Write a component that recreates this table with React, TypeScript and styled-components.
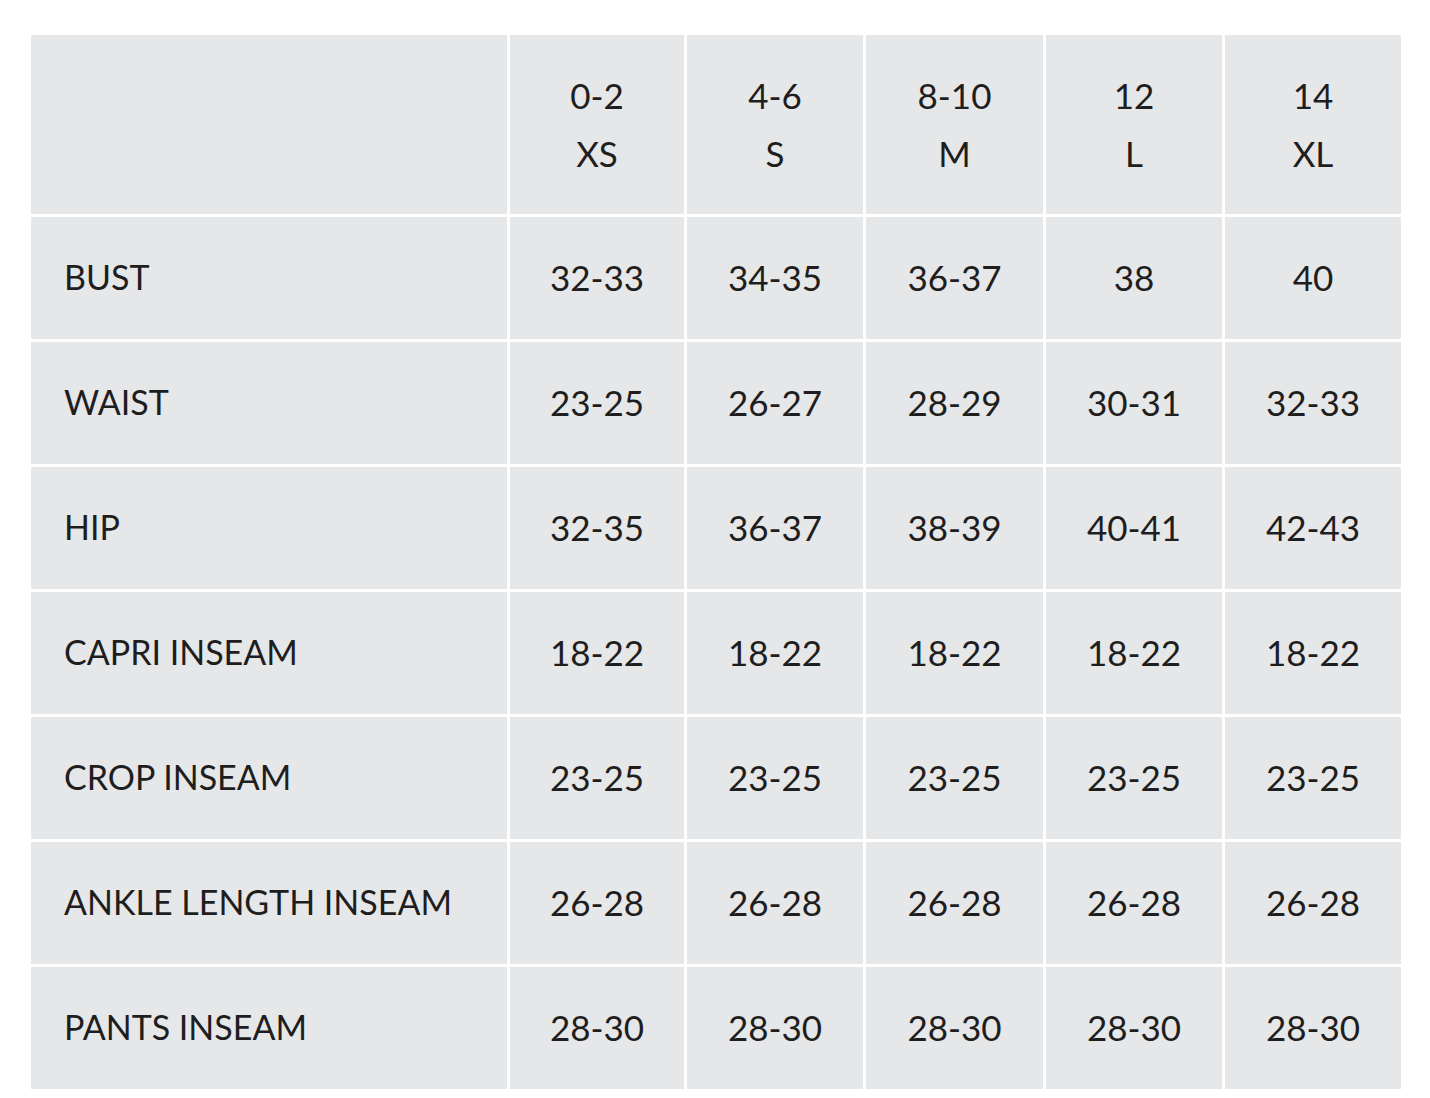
import React from "react";
import styled, { createGlobalStyle } from "styled-components";

const Global = createGlobalStyle`
  html, body { margin: 0; padding: 0; background: #ffffff; }
  body { font-family: Lato, "Open Sans", sans-serif; }
`;

const Page = styled.div`
  padding: 35px 30px 10px 31px;
`;

const Grid = styled.div`
  display: grid;
  grid-template-columns: 476px 174px 176px 177px 176px 176px;
  grid-template-rows: 179px repeat(7, 122px);
  gap: 3px;
  width: 1370px;
`;

const Cell = styled.div<{ $label?: boolean }>`
  background: #e6e7e8;
  color: #1e1e1e;
  font-family: Lato, "Open Sans", sans-serif;
  font-size: ${(p) => (p.$label ? "34px" : "35px")};
  font-weight: 400;
  display: flex;
  align-items: center;
  justify-content: ${(p) => (p.$label ? "flex-start" : "center")};
  padding-left: ${(p) => (p.$label ? "33px" : "0")};
  padding-bottom: 3px;
  white-space: nowrap;
`;

const HeadCell = styled(Cell)`
  flex-direction: column;
  justify-content: center;
  align-items: center;
  line-height: 58px;
  padding-bottom: 1px;
`;

const sizes = [
  ["0-2", "XS"],
  ["4-6", "S"],
  ["8-10", "M"],
  ["12", "L"],
  ["14", "XL"],
];

const rows: [string, string[]][] = [
  ["BUST", ["32-33", "34-35", "36-37", "38", "40"]],
  ["WAIST", ["23-25", "26-27", "28-29", "30-31", "32-33"]],
  ["HIP", ["32-35", "36-37", "38-39", "40-41", "42-43"]],
  ["CAPRI INSEAM", ["18-22", "18-22", "18-22", "18-22", "18-22"]],
  ["CROP INSEAM", ["23-25", "23-25", "23-25", "23-25", "23-25"]],
  ["ANKLE LENGTH INSEAM", ["26-28", "26-28", "26-28", "26-28", "26-28"]],
  ["PANTS INSEAM", ["28-30", "28-30", "28-30", "28-30", "28-30"]],
];

export default function App() {
  return (
    <Page>
      <Global />
      <Grid>
        <Cell $label />
        {sizes.map(([n, s]) => (
          <HeadCell key={n}>
            <span>{n}</span>
            <span>{s}</span>
          </HeadCell>
        ))}
        {rows.map(([label, vals]) => (
          <React.Fragment key={label}>
            <Cell $label>{label}</Cell>
            {vals.map((v, i) => (
              <Cell key={i}>{v}</Cell>
            ))}
          </React.Fragment>
        ))}
      </Grid>
    </Page>
  );
}
